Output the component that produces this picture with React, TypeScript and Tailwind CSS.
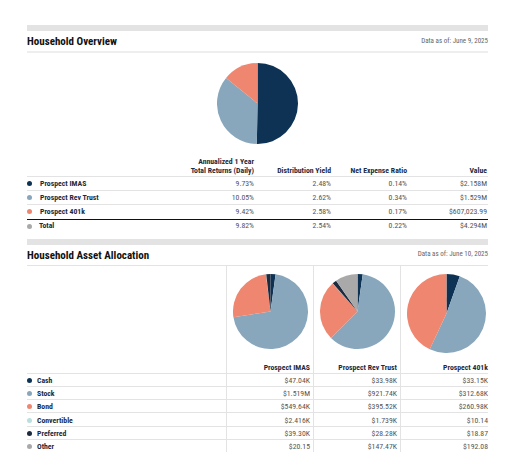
const NAVY = "#0d3253";
const BLUE = "#88a7bc";
const ORANGE = "#ef866f";
const PALE = "#b9dfe0";
const INK = "#1c2b3f";
const GREY = "#a9a9a9";

function Pie({ values, colors, size }: { values: number[]; colors: string[]; size: number }) {
  const total = values.reduce((a, b) => a + b, 0);
  const r = size / 2;
  let acc = 0;
  return (
    <svg width={size} height={size} viewBox={`0 0 ${size} ${size}`} className="block">
      {values.map((v, i) => {
        const a0 = (acc / total) * 2 * Math.PI;
        acc += v;
        const a1 = (acc / total) * 2 * Math.PI;
        const x0 = r + r * Math.sin(a0);
        const y0 = r - r * Math.cos(a0);
        const x1 = r + r * Math.sin(a1);
        const y1 = r - r * Math.cos(a1);
        const large = a1 - a0 > Math.PI ? 1 : 0;
        return <path key={i} d={`M${r} ${r}L${x0} ${y0}A${r} ${r} 0 ${large} 1 ${x1} ${y1}Z`} fill={colors[i]} />;
      })}
    </svg>
  );
}

function SectionHead({ title, date }: { title: string; date: string }) {
  return (
    <div className="flex h-[20px] items-center justify-between">
      <h2 className="pt-[1px] text-[11px] font-bold leading-none text-[#111] [font-stretch:75%]">{title}</h2>
      <span className="text-[7px] leading-none text-[#666] [font-stretch:75%]">{date}</span>
    </div>
  );
}

const overviewRows = [
  { color: NAVY, name: "Prospect IMAS", v: ["9.73%", "2.48%", "0.14%", "$2.158M"] },
  { color: BLUE, name: "Prospect Rev Trust", v: ["10.05%", "2.62%", "0.34%", "$1.529M"] },
  { color: ORANGE, name: "Prospect 401k", v: ["9.42%", "2.58%", "0.17%", "$607,023.99"] },
];

const assetRows = [
  { color: NAVY, name: "Cash", v: ["$47.04K", "$33.98K", "$33.15K"] },
  { color: BLUE, name: "Stock", v: ["$1.519M", "$921.74K", "$312.68K"] },
  { color: ORANGE, name: "Bond", v: ["$549.64K", "$395.52K", "$260.98K"] },
  { color: PALE, name: "Convertible", v: ["$2.416K", "$1.739K", "$10.14"] },
  { color: INK, name: "Preferred", v: ["$39.30K", "$28.28K", "$18.87"] },
  { color: GREY, name: "Other", v: ["$20.15", "$147.47K", "$192.08"] },
];

const pieColors = [NAVY, BLUE, ORANGE, PALE, INK, GREY];
const pies = [
  { name: "Prospect IMAS", size: 75, values: [47.04, 1519, 549.64, 2.416, 39.3, 0.02] },
  { name: "Prospect Rev Trust", size: 75, values: [33.98, 921.74, 395.52, 1.739, 28.28, 147.47] },
  { name: "Prospect 401k", size: 79, values: [33.15, 312.68, 260.98, 0.01, 0.02, 0.19] },
];

const overviewGrid = "grid grid-cols-[150px_77px_77px_76px_80px]";
const assetGrid = "grid grid-cols-[200px_87px_87px_87px]";

function Dot({ color }: { color: string }) {
  return <span className="h-[5px] w-[5px] shrink-0 rounded-full" style={{ backgroundColor: color }} />;
}

export default function App() {
  return (
    <div className="h-[456px] w-[512px] overflow-hidden bg-white pl-[27px] pr-[24px] pt-[25px] font-['Roboto',sans-serif] text-[7.75px] text-[#555]">
      <div className="h-[6px] bg-[#e3e3e3]" />
      <SectionHead title="Household Overview" date="Data as of: June 9, 2025" />
      <div className="h-[2px] bg-[#eeeeee]" />
      <div className="flex justify-center pt-[10px]">
        <Pie size={81} values={[2.158, 1.529, 0.607]} colors={[NAVY, BLUE, ORANGE]} />
      </div>

      <div className={`${overviewGrid} mt-[11px] h-[21px] items-end pb-[1px] text-right font-bold leading-[9px] text-[#1c2b3f] [font-stretch:75%]`}>
        <span className="col-start-2 whitespace-nowrap">Annualized 1 Year<br />Total Returns (Daily)</span>
        <span>Distribution Yield</span>
        <span>Net Expense Ratio</span>
        <span>Value</span>
      </div>
      {overviewRows.map((r) => (
        <div key={r.name} className={`${overviewGrid} h-[14.2px] items-center border-t-[1.5px] border-[#e3e3e3] text-right [font-stretch:75%]`}>
          <span className="flex items-center gap-[8px] text-left font-bold text-[#1c2b3f]">
            <Dot color={r.color} />
            {r.name}
          </span>
          {r.v.map((x, i) => <span key={i}>{x}</span>)}
        </div>
      ))}
      <div className={`${overviewGrid} h-[14px] items-center border-t-[1.5px] border-[#111] text-right [font-stretch:75%]`}>
        <span className="flex items-center gap-[7px] text-left font-bold text-[#1c2b3f]">
          <Dot color={GREY} />
          Total
        </span>
        <span>9.82%</span>
        <span>2.54%</span>
        <span>0.22%</span>
        <span>$4.294M</span>
      </div>

      <div className="mt-[6px] h-[6px] bg-[#e3e3e3]" />
      <SectionHead title="Household Asset Allocation" date="Data as of: June 10, 2025" />

      <div className={`${assetGrid} border-t-[1.5px] border-[#e3e3e3]`}>
        <div className="border-r-[1.5px] border-[#e3e3e3]" />
        {pies.map((p, i) => (
          <div key={p.name} className={`flex h-[107px] flex-col justify-between ${i < 2 ? "border-r-[1.5px] border-[#e3e3e3]" : ""}`}>
            <div className={`flex justify-center pt-[8px] ${i === 2 ? "pl-[3px]" : ""}`}>
              <Pie size={p.size} values={p.values} colors={pieColors} />
            </div>
            <span className={`pb-[1px] text-right font-bold leading-[9px] text-[#1c2b3f] [font-stretch:75%] ${i < 2 ? "pr-[3px]" : ""}`}>{p.name}</span>
          </div>
        ))}
      </div>
      {assetRows.map((r) => (
        <div key={r.name} className={`${assetGrid} h-[13.3px] border-t-[1.5px] border-[#e3e3e3] text-right leading-[11px] [font-stretch:75%]`}>
          <span className="flex items-center gap-[5px] border-r-[1.5px] border-[#e3e3e3] pt-[1px] text-left font-bold text-[#1c2b3f]">
            <Dot color={r.color} />
            {r.name}
          </span>
          {r.v.map((x, i) => (
            <span key={i} className={`flex items-center justify-end pt-[1px] ${i < 2 ? "border-r-[1.5px] border-[#e3e3e3] pr-[3px]" : ""}`}>{x}</span>
          ))}
        </div>
      ))}
    </div>
  );
}
